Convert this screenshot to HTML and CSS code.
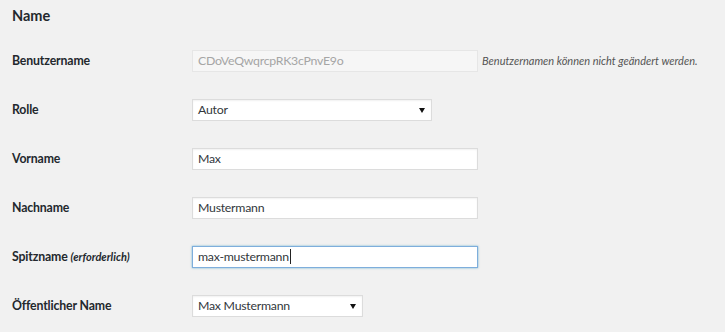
FILE: index.html
```html
<!DOCTYPE html>
<html lang="de">
<head>
<meta charset="utf-8">
<link rel="stylesheet" href="styles.css">
</head>
<body>
<div class="page">
  <h2 class="title">Name</h2>
  <div class="form">
    <div class="row">
      <div class="label">Benutzername</div>
      <div class="cell">
        <div class="field wide disabled">CDoVeQwqrcpRK3cPnvE9o</div>
        <span class="desc">Benutzernamen können nicht geändert werden.</span>
      </div>
    </div>
    <div class="row">
      <div class="label">Rolle</div>
      <div class="cell">
        <div class="field select role">Autor<span class="arrow"></span></div>
      </div>
    </div>
    <div class="row">
      <div class="label">Vorname</div>
      <div class="cell"><div class="field wide">Max</div></div>
    </div>
    <div class="row">
      <div class="label">Nachname</div>
      <div class="cell"><div class="field wide">Mustermann</div></div>
    </div>
    <div class="row">
      <div class="label">Spitzname <em class="req">(erforderlich)</em></div>
      <div class="cell"><div class="field wide focus">max-mustermann<span class="caret"></span></div></div>
    </div>
    <div class="row">
      <div class="label">Öffentlicher Name</div>
      <div class="cell">
        <div class="field select display">Max Mustermann<span class="arrow"></span></div>
      </div>
    </div>
  </div>
</div>
</body>
</html>
```
FILE: styles.css
```css
html, body {
  margin: 0;
  padding: 0;
  background: #f1f1f1;
}
body {
  font-family: "Lato", "Open Sans", sans-serif;
  color: #23282d;
  font-size: 12px;
}
.page {
  padding-left: 12px;
}
.title {
  margin: 0;
  padding-top: 6px;
  height: 30px;
  font-size: 14.5px;
  line-height: 20px;
  font-weight: 700;
  color: #23282d;
}
.form {
  display: flex;
  flex-direction: column;
}
.row {
  display: flex;
  align-items: center;
  height: 49px;
}
.label {
  width: 180px;
  flex: none;
  font-weight: 700;
  font-size: 12.3px;
  letter-spacing: -0.15px;
  color: #23282d;
}
.req {
  font-size: 11px;
  font-style: italic;
  letter-spacing: 0;
}
.cell {
  display: flex;
  align-items: center;
}
.field {
  box-sizing: border-box;
  height: 22px;
  line-height: 20px;
  padding: 0 5px;
  background: #fff;
  border: 1px solid #dcdcdc;
  box-shadow: inset 0 1px 2px rgba(0,0,0,0.06);
  font-size: 12.3px;
  letter-spacing: -0.25px;
  color: #32373c;
  position: relative;
  white-space: nowrap;
}
.wide { width: 286px; }
.disabled {
  background: #f6f6f6;
  border-color: #e6e6e6;
  color: #a5a5a5;
  box-shadow: none;
}
.focus {
  border-color: #7eaedc;
  box-shadow: 0 0 2px rgba(30,140,190,0.6);
}
.caret {
  display: inline-block;
  width: 1px;
  height: 15px;
  background: #222;
  vertical-align: -3px;
  margin-left: 1px;
}
.role { width: 240px; }
.display { width: 171px; }
.arrow {
  position: absolute;
  right: 6px;
  top: 8px;
  width: 0;
  height: 0;
  border-left: 3px solid transparent;
  border-right: 3px solid transparent;
  border-top: 5px solid #111;
}
.desc {
  margin-left: 4px;
  font-style: italic;
  font-size: 11px;
  color: #555;
}
```
